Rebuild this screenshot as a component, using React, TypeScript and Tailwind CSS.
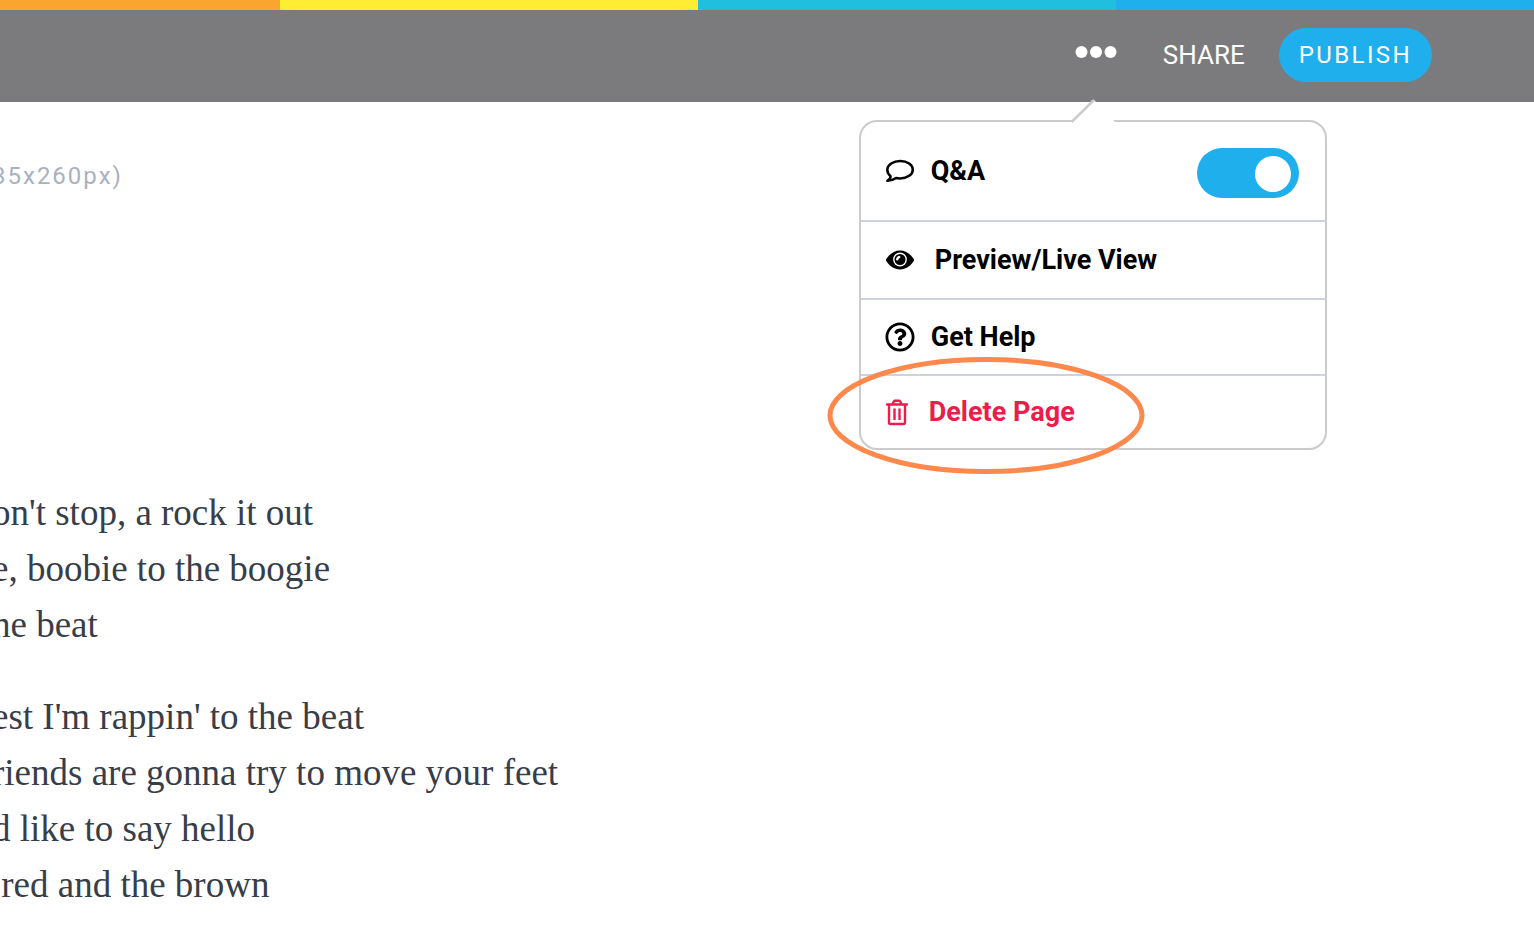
import React, { useState } from 'react';
import { FaRegQuestionCircle } from 'react-icons/fa';

const stripes = [
  'grow-[280] bg-[#faa52f]',
  'grow-[418] bg-[#ffed33]',
  'grow-[418] bg-[#20bfdd]',
  'grow-[418] bg-[#1fafed]',
];

const verses = [
  ["on't stop, a rock it out", 'e, boobie to the boogie', 'he beat'],
  ["est I'm rappin' to the beat", 'riends are gonna try to move your feet', 'd like to say hello', ' red and the brown'],
];

function CommentIcon() {
  return (
    <svg viewBox="0 0 30 24" className="w-[30px] h-6" fill="none" stroke="currentColor" strokeWidth="2.5" strokeLinejoin="round">
      <path d="M15.300 2c7 0 12.500 3.900 12.500 8.700s-5.500 8.700-12.500 8.700c-1.500 0-2.900-.15-4.200-.45-2.300 1.700-5 2.700-8.700 2.900 2.200-1.500 3.200-2.800 3.200-4.600C3.700 15.600 2.300 13.300 2.300 10.700 2.300 5.900 8.300 2 15.300 2z" />
    </svg>
  );
}

function EyeIcon() {
  return (
    <svg viewBox="0 0 30 20" className="w-[30px] h-5">
      <path d="M.8 10C4 4 9.300.5 15 .5S26 4 29.200 10c-3.200 6-8.500 9.500-14.200 9.500S4 16 .8 10z" fill="currentColor" />
      <circle cx="15" cy="9.500" r="6.200" fill="none" stroke="#fff" strokeWidth="1.400" />
      <path d="M12.200 9.300a3 3 0 0 1 2-2.300" fill="none" stroke="#fff" strokeWidth="2.400" strokeLinecap="round" />
    </svg>
  );
}

function TrashIcon() {
  return (
    <svg viewBox="0 0 24 28" className="w-6 h-7" fill="none" stroke="currentColor" strokeWidth="2.400" strokeLinecap="round" strokeLinejoin="round">
      <path d="M2 6.500h20M4 6.500v18a1.500 1.500 0 0 0 1.500 1.500h13a1.500 1.500 0 0 0 1.500-1.500V6.500M7.500 6.500L8.800 3.500a1.500 1.500 0 0 1 1.300-.8h3.800a1.500 1.500 0 0 1 1.300.8l1.300 3" />
      <path d="M9.500 10.500v11.500M14.500 10.500v11.500" strokeLinecap="butt" />
    </svg>
  );
}

function PageMenu() {
  const [qa, setQa] = useState(true);

  return (
    <div className="absolute top-[89px] -right-[210px] w-[468px] rounded-[18px] border-2 border-[#cbcbcb] bg-white text-black font-bold text-[27px] leading-8">
      {/* pointer towards the dots button */}
      <svg viewBox="0 0 46 25" className="absolute -top-6 left-[210px] w-[46px] h-[25px]">
        <path d="M1 25L23 2l22 23z" fill="#fff" />
        <path d="M.5 24L23 2" fill="none" stroke="#cbcbcb" strokeWidth="2.500" />
      </svg>

      <div className="flex h-[100px] items-center justify-between border-b-2 border-[#ced1de] pl-6 pr-[26px]">
        <label htmlFor="qa" className="flex items-center gap-4">
          <CommentIcon />
          Q&amp;A
        </label>
        <div className="relative mt-1 h-[50px] w-[102px]">
          <input
            id="qa"
            type="checkbox"
            checked={qa}
            onChange={(e) => setQa(e.target.checked)}
            className="peer block h-full w-full appearance-none rounded-full bg-gray-300 checked:bg-[#1fafed]"
          />
          <span className="pointer-events-none absolute left-2 top-2 h-9 w-9 rounded-full bg-white peer-checked:left-[58px]" />
        </div>
      </div>
      <a href="#preview" className="flex h-[78px] items-center gap-5 border-b-2 border-[#ced1de] px-6">
        <EyeIcon />
        Preview/Live View
      </a>
      <a href="#help" className="flex h-[76px] items-center gap-4 border-b-2 border-[#ced1de] px-6">
        <FaRegQuestionCircle className="h-[30px] w-[30px]" />
        Get Help
      </a>
      <button type="button" className="relative flex h-[72px] w-full items-center gap-5 px-6 text-[#ec1c4b]">
        <TrashIcon />
        Delete Page
        <svg viewBox="0 0 318 118" className="pointer-events-none absolute -left-[34px] -top-5 h-[118px] w-[318px]">
          <ellipse cx="159" cy="59.500" rx="156" ry="56" fill="none" stroke="#ff884d" strokeWidth="5" />
        </svg>
      </button>
    </div>
  );
}

export default function App() {
  return (
    <div className="min-h-screen overflow-hidden bg-white font-['Roboto',sans-serif]">
      <div className="flex h-[10px]">
        {stripes.map((stripe) => (
          <div key={stripe} className={stripe} />
        ))}
      </div>

      <header className="flex h-[92px] items-center justify-end bg-[#7b7b7d] pr-[102px] pb-[2px] text-white">
        <div className="relative mr-[46px]">
          <button type="button" aria-label="More options" className="flex h-12 items-center">
            <svg viewBox="0 0 42 18" className="mb-1 h-[18px] w-[42px]" fill="currentColor">
              <circle cx="6.500" cy="8" r="6" />
              <circle cx="21" cy="8" r="6" />
              <circle cx="35.500" cy="8" r="6" />
            </svg>
          </button>
          <PageMenu />
        </div>
        <a href="#share" className="mr-[34px] text-[26px] leading-8">SHARE</a>
        <button type="button" className="h-[54px] rounded-full bg-[#1fafed] px-5 text-2xl tracking-widest">
          PUBLISH
        </button>
      </header>

      <main className="-ml-2">
        <p className="pt-[58px] text-2xl leading-8 tracking-[2px] text-[#a9b1c1]">35x260px)</p>
        <div className="mt-[293px] flex flex-col gap-9 whitespace-pre font-['Liberation_Serif',serif] text-[37px] leading-[56px] text-[#373e49]">
          {verses.map((lines, i) => (
            <div key={i}>
              {lines.map((line) => (
                <p key={line}>{line}</p>
              ))}
            </div>
          ))}
        </div>
      </main>
    </div>
  );
}
